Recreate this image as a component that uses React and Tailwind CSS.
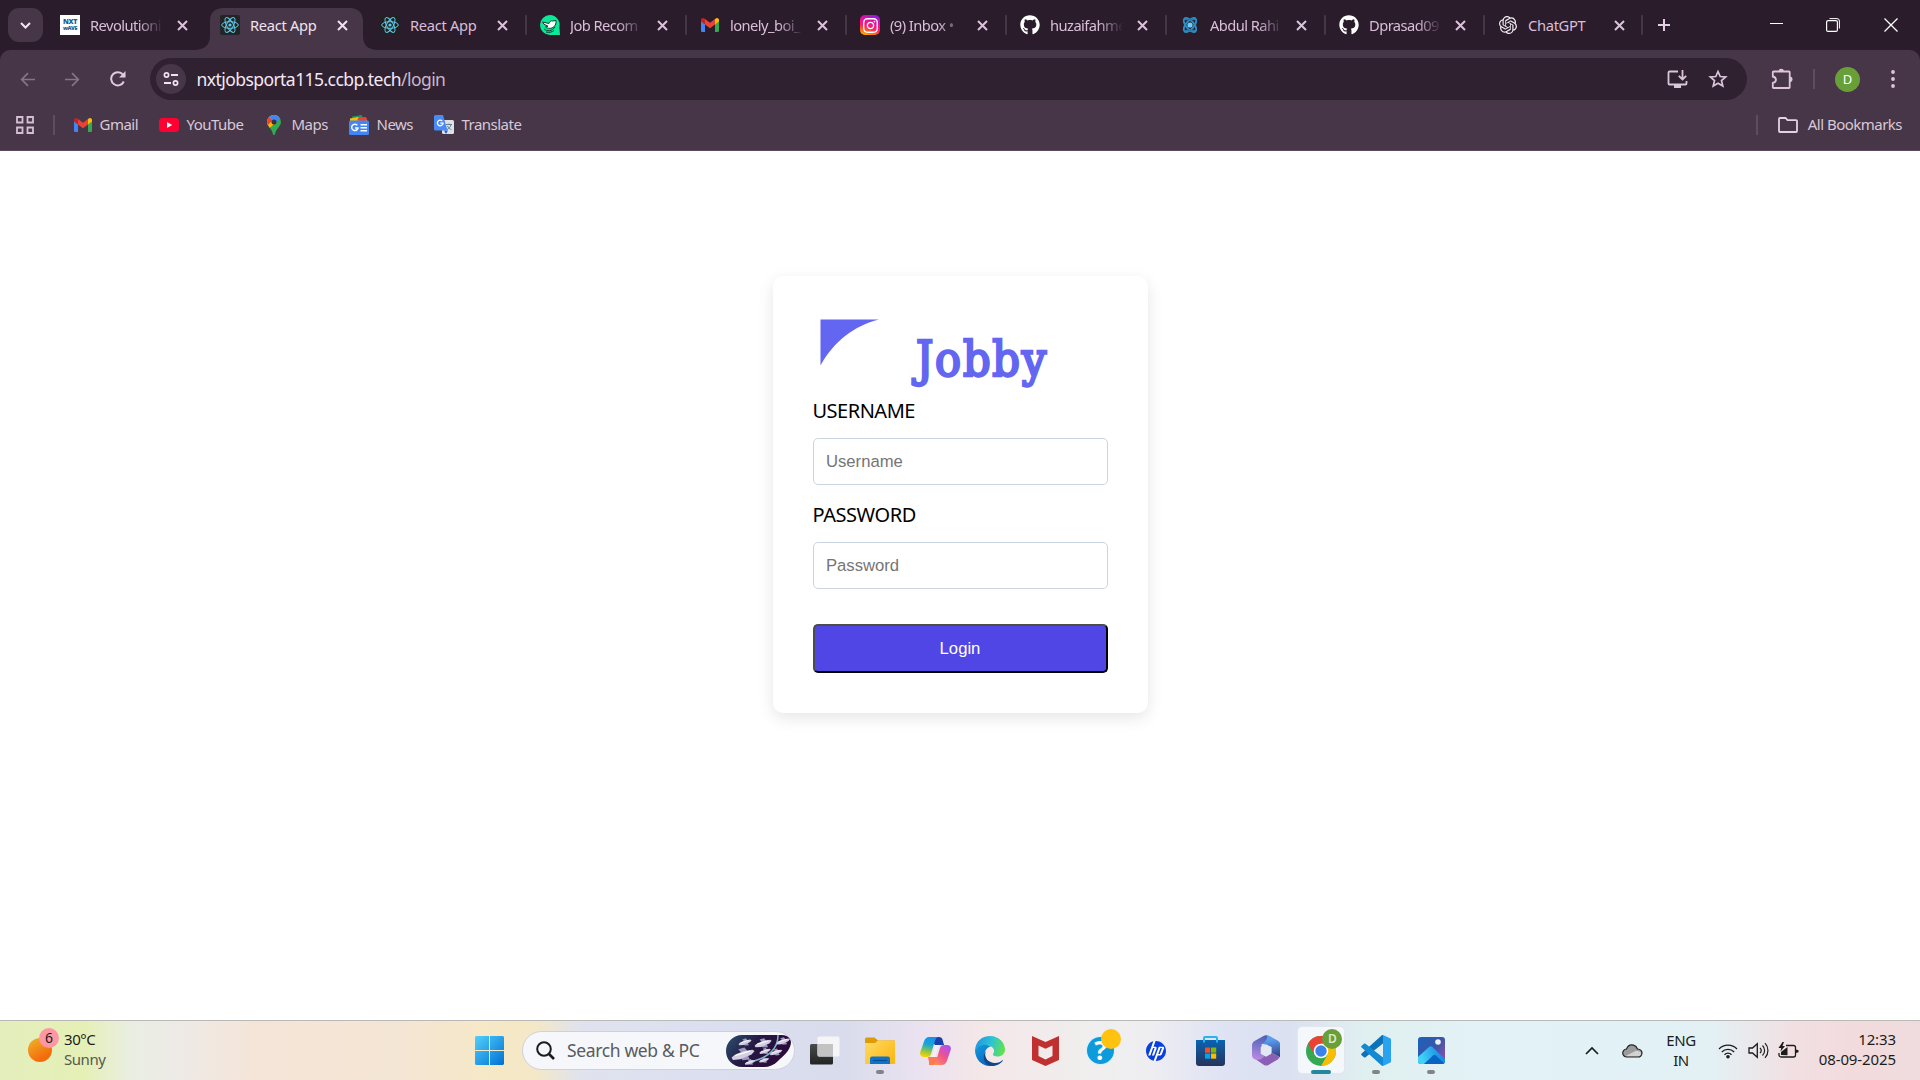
import React from "react";
import { FaGithub, FaInstagram } from "react-icons/fa";
import { SiOpenai, SiHp } from "react-icons/si";

const S = ({ w = 20, h, vb, children, className = "" }) => (
  <svg width={w} height={h || w} viewBox={vb || `0 0 ${w} ${h || w}`} fill="none" className={`block shrink-0 ${className}`}>
    {children}
  </svg>
);

/* ---------- favicons ---------- */
const NxtWave = () => (
  <div className="flex h-5 w-5 flex-col items-center justify-center bg-white text-[7px] leading-[6px] font-black tracking-[-0.4px] text-[#1d5c92]">
    <span>NXT</span>
    <span className="text-[5.5px] leading-[6px] text-[#2d5f86]">wAVE</span>
  </div>
);
const ReactIcon = ({ bg = "#222426", c = "#5fc9e6" }) => (
  <S>
    <rect width="20" height="20" rx="2" fill={bg} />
    <g stroke={c} strokeWidth="1">
      <ellipse cx="10" cy="10" rx="8.3" ry="3.3" />
      <ellipse cx="10" cy="10" rx="8.3" ry="3.3" transform="rotate(60 10 10)" />
      <ellipse cx="10" cy="10" rx="8.3" ry="3.3" transform="rotate(120 10 10)" />
    </g>
    <circle cx="10" cy="10" r="1.6" fill={c} />
  </S>
);
const BirdIcon = () => (
  <S>
    <path d="M10 0a10 10 0 0 1 9.4 12.2L20 20H10A10 10 0 0 1 10 0z" fill="#0be897" />
    <path d="M2.5 7 9 8.500c.5-2 2-3 3.500-2.500l3.500-.5c.5 3-1 6.500-4 7.500-2.500.8-5 .3-6.500-1l2.500-.8-4-2z" fill="#fff" stroke="#153c33" strokeWidth="1" />
    <path d="M4 14c3 2.400 8 2.600 11-2M6 17c3 .8 6 .2 8-1.500" stroke="#153c33" strokeWidth="1" />
  </S>
);
const GmailIcon = () => (
  <S w={18} h={14}>
    <path d="M0 2.400V12.800A1.200 1.200 0 0 0 1.200 14H4V6z" fill="#4285f4" />
    <path d="M18 2.400V12.800A1.200 1.200 0 0 1 16.800 14H14V6z" fill="#34a853" />
    <path d="M14 1.200V6.500l4-3V2C18 .2 15.900-.6 14.600.600z" fill="#fbbc04" />
    <path d="M4 6.500V1l5 3.800L14 1v5.500l-5 3.800z" fill="#ea4335" />
    <path d="M0 2v1.500l4 3V1l-.6-.4C2.100-.6 0 .2 0 2z" fill="#c5221f" />
  </S>
);
const InstaIcon = () => (
  <div className="flex h-5 w-5 items-center justify-center rounded-[5px] bg-[linear-gradient(200deg,#7a1cf0_0%,#f0109a_38%,#ff1f6a_60%,#ff8a00_85%,#ffc800_100%)]">
    <FaInstagram size={17} color="#fff" />
  </div>
);
const GitIcon = () => <FaGithub size={20} color="#fff" />;
const AtomIcon = () => (
  <S>
    <g stroke="#2f8fc4" strokeWidth="1.900">
      <ellipse cx="10" cy="10" rx="8.500" ry="4" transform="rotate(50 10 10)" />
      <ellipse cx="10" cy="10" rx="8.500" ry="4" transform="rotate(130 10 10)" />
    </g>
    <path d="M5 4.500h10M5 15.500h10" stroke="#2878ae" strokeWidth="1.300" />
    <circle cx="10" cy="10" r="2.600" fill="#6ecdf2" />
  </S>
);
const GptIcon = () => <SiOpenai size={18} color="#f2ecf2" />;

const tabs = [
  { t: "Revolutioni", i: <NxtWave />, fade: true, w: "w-[160px]" },
  { t: "React App", i: <ReactIcon />, active: true, w: "w-[160px]" },
  { t: "React App", i: <ReactIcon bg="#232023" />, w: "w-[160px]", sep: true },
  { t: "Job Recom", i: <BirdIcon />, fade: true, w: "w-[160px]", sep: true },
  { t: "lonely_boi_", i: <GmailIcon />, fade: true, w: "w-[160px]", sep: true },
  { t: "(9) Inbox •", i: <InstaIcon />, fade: true, w: "w-[160px]", sep: true },
  { t: "huzaifahme", i: <GitIcon />, fade: true, w: "w-[160px]", sep: true },
  { t: "Abdul Rahi", i: <AtomIcon />, fade: true, w: "w-[159px]", sep: true, narrow: true },
  { t: "Dprasad09", i: <GitIcon />, fade: true, w: "w-[159px]", sep: true, narrow: true },
  { t: "ChatGPT", i: <GptIcon />, w: "w-[158px]", sep: true, narrow: true },
];

const Tab = ({ t, i, active, fade, w, sep, narrow }) => (
  <div className={`relative flex h-[42px] shrink-0 items-center pb-2 pl-[13px] ${w}`}>
    {active && (
      <S w={184} h={42} className="absolute top-0 left-[-13px]">
        <path d="M0 42C10 42 16 37 16 28V13C16 5 21 0 29 0H156C164 0 169 5 169 13V28C169 37 174 42 184 42z" fill="#473647" />
      </S>
    )}
    <div className="relative flex w-5 shrink-0 justify-center">{i}</div>
    <div
      className={`relative ml-[10px] w-[73px] shrink-0 overflow-hidden text-[14.7px] leading-5 whitespace-nowrap ${
        active ? "text-[#f0e2f0]" : "text-[#d9bdd9]"
      } ${fade ? "tracking-[-0.56px] [mask-image:linear-gradient(to_right,black_66%,transparent_100%)]" : "tracking-[-0.32px]"}`}
    >
      {t}
    </div>
    <S w={11} className={`relative ${narrow ? "ml-[13px]" : "ml-[14px]"}`}>
      <path d="M1 1l9 9M10 1l-9 9" stroke={active ? "#f0e2f0" : "#dcc3dc"} strokeWidth="2" />
    </S>
    {sep && <div className="ml-auto h-5 w-[2px] rounded-full bg-[#473647]" />}
  </div>
);

/* ---------- bookmarks ---------- */
const YouTubeIcon = () => (
  <S w={20} h={14}>
    <rect width="20" height="14" rx="3.500" fill="#ff0033" />
    <path d="M8 4l5.200 3L8 10z" fill="#fff" />
  </S>
);
const MapsIcon = () => (
  <S w={14} h={20}>
    <clipPath id="pin"><path d="M7 0a7 7 0 0 1 7 7c0 4.500-5.200 6.500-5.900 12.200-.2 1-2 1-2.200 0C5.200 13.500 0 11.500 0 7a7 7 0 0 1 7-7z" /></clipPath>
    <g clipPath="url(#pin)">
      <rect width="14" height="20" fill="#34a853" />
      <path d="M0 0h14L5 11 0 15z" fill="#fbbc04" />
      <path d="M3 0h11v3L8 8 3 2z" fill="#4285f4" />
      <path d="M0 3 4 0h10L9 4 5 8 1.500 4z" fill="#4285f4" opacity=".6" />
      <path d="M0 3.500 1.800 2 5.500 5.200 1 10 0 8z" fill="#ea4335" />
    </g>
    <circle cx="7" cy="7" r="2.500" fill="#3b3040" />
  </S>
);
const NewsIcon = () => (
  <S>
    <path d="M3 1.500 13 0l1 5H3z" fill="#0f9d58" />
    <path d="M6 3l11-1 1 4H6z" fill="#ea4335" />
    <path d="M1 3.500 9 2l9 3v3H1z" fill="#fbbc04" />
    <path d="M10 1.500l8 2-1 3-9-1z" fill="#ea4335" />
    <rect y="5.500" width="20" height="14.500" rx="1.500" fill="#4285f4" />
    <path d="M11.500 9.700H18M11.500 12.700H18M11.500 15.700H18" stroke="#fff" strokeWidth="1.500" />
    <path d="M8.300 10.300A3.200 3.200 0 1 0 9 13H6" stroke="#fff" strokeWidth="1.500" />
  </S>
);
const TranslateIcon = () => (
  <S>
    <rect x="8" y="5" width="12" height="14" rx="1.500" fill="#dfe1e5" />
    <path d="M12 9.500h6M15 8.500v1M17 9.500c-.5 2.500-2 4-4 5M13.500 11c1 2 2.500 3 4 3.800" stroke="#5f7f95" strokeWidth="1" />
    <path d="M10 15.500h4L12 19z" fill="#2a56c6" />
    <path d="M1.500 0H9l4.500 15.500h-12A1.500 1.500 0 0 1 0 14V1.500A1.500 1.500 0 0 1 1.500 0z" fill="#4a8af4" />
    <path d="M8.200 6A2.800 2.800 0 1 0 9 8.200H6.300" stroke="#fff" strokeWidth="1.300" />
  </S>
);

const Bookmark = ({ icon, label, className = "" }) => (
  <div className={`flex items-center whitespace-nowrap ${className}`}>
    {icon}
    <span className="mb-[2px] ml-2">{label}</span>
  </div>
);

/* ---------- taskbar icons ---------- */
const WindowsIcon = () => (
  <S w={29}>
    <defs><linearGradient id="win" x1="0" y1="0" x2="29" y2="29" gradientUnits="userSpaceOnUse"><stop stopColor="#52d0fb" /><stop offset="1" stopColor="#0070d4" /></linearGradient></defs>
    <path d="M1 0h13v14H0V1zM15 0h13l1 1v13H15zM0 15h14v14H1l-1-1zM15 15h14v13l-1 1H15z" fill="url(#win)" />
  </S>
);
const TaskView = () => (
  <S w={30} h={30}>
    <defs><linearGradient id="tv" x1="0" y1="8" x2="0" y2="28" gradientUnits="userSpaceOnUse"><stop stopColor="#4a4b4b" /><stop offset="1" stopColor="#232424" /></linearGradient></defs>
    <rect x="0" y="8" width="23" height="20.500" rx="1.500" fill="url(#tv)" />
    <rect x="7.500" y="0.500" width="22" height="20" rx="1.500" fill="#f5f5f7" />
    <path d="M7.500 8h15.500v12.500H9L7.500 19z" fill="#c3c3c4" />
  </S>
);
const Explorer = () => (
  <S w={30} h={27}>
    <defs><linearGradient id="ex" x1="0" y1="3" x2="24" y2="27" gradientUnits="userSpaceOnUse"><stop stopColor="#ffdb66" /><stop offset="1" stopColor="#fcb917" /></linearGradient></defs>
    <path d="M0 2a1.500 1.500 0 0 1 1.500-1.500H9.500L13 3.500H29a1 1 0 0 1 1 1V10H0z" fill="#dd9b05" />
    <path d="M0 6h10l3-2.500h16.500l.5.500v22.500l-.5.500H.5L0 26.500z" fill="url(#ex)" />
    <path d="M5 27v-5.500A2 2 0 0 1 7 19.500H23a2 2 0 0 1 2 2V27z" fill="#0f74c9" />
    <path d="M8 23.500H22" stroke="#074f93" strokeWidth="1.200" />
  </S>
);
const Copilot = () => (
  <S w={31} h={28}>
    <defs>
      <linearGradient id="cp1" x1="12" y1="0" x2="8" y2="20" gradientUnits="userSpaceOnUse"><stop stopColor="#1690e8" /><stop offset=".4" stopColor="#1aa6d8" /><stop offset=".7" stopColor="#7cc553" /><stop offset="1" stopColor="#ffd000" /></linearGradient>
      <linearGradient id="cp2" x1="27" y1="8" x2="12" y2="28" gradientUnits="userSpaceOnUse"><stop stopColor="#ae52f0" /><stop offset=".45" stopColor="#f0528e" /><stop offset="1" stopColor="#ff9a50" /></linearGradient>
    </defs>
    <path d="M9 0h10c2 0 3 1 3.500 2.500L24 8H15z" fill="#1b3fae" />
    <path d="M9 28h10c2 0 3-1 4-4l1-4H8l1 5z" fill="#ff7a53" />
    <path d="M9.500 0H18c-2.500 1-3 3.500-3.700 6L11 17c-.6 2-1.800 3-4 3H4c-3 0-4.500-2-3.700-5L4 4.500C5 1.500 6.500 0 9.500 0z" fill="url(#cp1)" />
    <path d="M21.500 28H13c2.500-1 3-3.500 3.700-6L20 11c.6-2 1.800-3 4-3h3c3 0 4.500 2 3.700 5L27 23.500c-1 3-2.500 4.500-5.500 4.500z" fill="url(#cp2)" />
    <path d="M15 8h4.500c-1 .8-1.500 1.800-1.800 3L15.200 20H11c.8-.8 1-1.500 1.300-2.500z" fill="#f6ecf4" />
  </S>
);
const Edge = () => (
  <S w={30} h={30} vb="0 0 30 30">
    <defs>
      <linearGradient id="ed1" x1="2" y1="6" x2="29" y2="14" gradientUnits="userSpaceOnUse"><stop stopColor="#1f9be2" /><stop offset=".5" stopColor="#2fc3d2" /><stop offset="1" stopColor="#62e34c" /></linearGradient>
      <linearGradient id="ed2" x1="3" y1="10" x2="16" y2="29" gradientUnits="userSpaceOnUse"><stop stopColor="#1296dc" /><stop offset="1" stopColor="#0a5fb8" /></linearGradient>
    </defs>
    <path d="M0 14C1 5 7 0 15 0c9 0 15 6.500 15 13.500 0 4.500-3.500 7-7.500 7-3 0-5-1-4.500-2.500 1.800-2 1.500-4.500-.5-6.500C13 7.500 4 8 0 14z" fill="url(#ed1)" />
    <path d="M0 14C3 8.500 11 7.500 15.500 10.500 11.500 11.500 9 15.500 10 20c1 5 5 8.500 9.500 9.200C18 29.800 16.500 30 15 30 6.500 30 0 23 0 14z" fill="url(#ed2)" />
    <path d="M11 15c-3 7 3 12 9 12 3.500 0 6-1.500 7.300-2.800.4-.4.700.1.500.5C25.500 28 20.500 30 17 30 9 29.500 6.500 20.500 11 15z" fill="#12468a" />
  </S>
);
const McAfee = () => (
  <S w={27} h={30}>
    <path d="M0 0l13.500 6L27 0v24l-13.500 6L0 24zM6.500 9.500v10.500L13.500 23.500l7-3.500V9.500L13.500 12.800z" fill="#c0302f" fillRule="evenodd" />
  </S>
);
const Help = () => (
  <div className="relative flex h-[27px] w-[27px] items-center justify-center rounded-full bg-[#0d9bdc] shadow-[0_0_0_1px_#d7eef8]">
    <span className="text-[26px] leading-[27px] font-bold text-white">?</span>
    <div className="absolute -top-2 left-[14px] h-5 w-5 rounded-full bg-[#ffc20e]" />
  </div>
);
const Hp = () => (
  <div className="rounded-full bg-white"><SiHp size={20} color="#0a41dc" /></div>
);
const Store = () => (
  <S w={29} h={30}>
    <defs><linearGradient id="st" x1="0" y1="4" x2="0" y2="30" gradientUnits="userSpaceOnUse"><stop stopColor="#0b63b2" /><stop offset="1" stopColor="#25335a" /></linearGradient></defs>
    <path d="M0 4h29v23a3 3 0 0 1-3 3H3a3 3 0 0 1-3-3z" fill="url(#st)" />
    <path d="M8 6.500V2A1 1 0 0 1 9 1H20a1 1 0 0 1 1 1V6.500" stroke="#27b5f1" strokeWidth="2" />
    <path d="M9 11.500h5.200v5.200H9z" fill="#f25022" /><path d="M15 11.500h5.200v5.200H15z" fill="#7fba00" />
    <path d="M9 17.500h5.200v5.200H9z" fill="#00a4ef" /><path d="M15 17.500h5.200v5.200H15z" fill="#ffb900" />
  </S>
);
const M365 = () => (
  <S w={28} h={31}>
    <defs>
      <linearGradient id="m1" x1="12" y1="0" x2="4" y2="26" gradientUnits="userSpaceOnUse"><stop stopColor="#4c5fb0" /><stop offset=".5" stopColor="#7f78cf" /><stop offset="1" stopColor="#c48be6" /></linearGradient>
      <linearGradient id="m2" x1="22" y1="4" x2="26" y2="24" gradientUnits="userSpaceOnUse"><stop stopColor="#5a9df0" /><stop offset="1" stopColor="#2f3474" /></linearGradient>
    </defs>
    <path d="M13 .5c2-.8 3.500 0 5 .8l8 4.500c1.500.8 2 2 2 3.500v13l-8.500-4.500V12L9 8z" fill="url(#m2)" />
    <path d="M4 24.500 13 19.500l6.500-2 8 4.500c-.3 1-.8 1.800-1.800 2.400L16.500 30c-1.500.8-3 .8-4.500 0z" fill="#8a5fb5" />
    <path d="M14.500.2C16 3 14 6.500 9.500 9.500v9l3.500 2c-2 2.500-5 5.500-10.500 3.800C.8 23.400 0 22 0 20.500v-10C0 8.500.8 7 2.500 6L12 .8z" fill="url(#m1)" />
    <path d="M14 9.200l5.300 3.100v6.400L14 21.800l-5.300-3.100v-6.400z" fill="#e3e7f4" />
  </S>
);
const Chrome = () => (
  <S w={30}>
    <circle cx="15" cy="15" r="15" fill="#34a853" />
    <path d="M2 7.500A15 15 0 0 1 28 7.500H15L8.500 18.700z" fill="#ea4335" />
    <path d="M28 7.500A15 15 0 0 1 15 30L21.500 18.700 15 7.500z" fill="#fbbc04" />
    <circle cx="15" cy="15" r="7.300" fill="#fff" />
    <circle cx="15" cy="15" r="5.700" fill="#3b82ea" />
  </S>
);
const VSCode = () => (
  <S w={30} h={31}>
    <path d="M22 0l7 3.200c.7.300 1 .8 1 1.500v21.600c0 .7-.3 1.200-1 1.500L22 31z" fill="#2aa2f2" />
    <path d="M22 0v8.500L4.500 22.300c-.6.400-1 .4-1.500 0L.6 20.200c-.6-.6-.6-1.200 0-1.800L20 1C20.500.3 21.200 0 22 0z" fill="#0e72b9" />
    <path d="M22 31v-8.500L4.500 8.700c-.6-.4-1-.4-1.500 0L.6 10.800c-.6.6-.6 1.200 0 1.800L20 30c.5.700 1.200 1 2 1z" fill="#1489d3" />
  </S>
);
const Photos = () => (
  <S w={27}>
    <defs>
      <linearGradient id="ph1" x1="0" y1="0" x2="27" y2="20" gradientUnits="userSpaceOnUse"><stop stopColor="#1a62bb" /><stop offset=".6" stopColor="#3b55a8" /><stop offset="1" stopColor="#8a4fa8" /></linearGradient>
      <linearGradient id="ph2" x1="4" y1="22" x2="22" y2="16" gradientUnits="userSpaceOnUse"><stop stopColor="#3fd3f7" /><stop offset="1" stopColor="#168fe6" /></linearGradient>
      <clipPath id="phc"><rect width="27" height="27" rx="3" /></clipPath>
    </defs>
    <g clipPath="url(#phc)">
      <rect width="27" height="27" fill="url(#ph1)" />
      <path d="M0 20 11 10c1.200-1 2.400-1 3.500 0L27 22v5H0z" fill="url(#ph2)" />
      <path d="M6 27l9-8.500c1-.9 2-.9 3 0L27 27z" fill="#0a64c4" />
      <circle cx="20" cy="5" r="2.800" fill="#eaf2fb" />
    </g>
  </S>
);

const apps = [
  { i: <TaskView /> },
  { i: <Explorer />, dot: true },
  { i: <Copilot /> },
  { i: <Edge /> },
  { i: <McAfee /> },
  { i: <Help /> },
  { i: <Hp /> },
  { i: <Store /> },
  { i: <M365 /> },
  { i: <Chrome />, on: true },
  { i: <VSCode />, dot: true },
  { i: <Photos />, dot: true },
];

const Fighter = ({ x, y, s = 1 }) => (
  <g transform={`translate(${x} ${y}) scale(${s}) rotate(-12)`}>
    <path d="M-4-6 3-6.500 6-1H-1zM-3 3h8l1 4.500-8-1z" fill="#9d97bb" />
    <path d="M-13 1.500C-11-1-4-2.500 2-3l9 .5 2 2L9 2.500-4 5-12 4z" fill="#d3cee2" />
    <path d="M-9 0 8-1.500" stroke="#fff" strokeWidth="1.300" />
  </g>
);

const SearchArt = () => (
  <S w={66} h={32}>
    <defs>
      <linearGradient id="sa" x1="0" y1="0" x2="40" y2="32" gradientUnits="userSpaceOnUse"><stop stopColor="#2a5270" /><stop offset=".55" stopColor="#241943" /><stop offset="1" stopColor="#2b0d3c" /></linearGradient>
      <clipPath id="sac"><path d="M16 0H56c6 0 9 4 9 8-1 8-8 13-13 18-4 4-9 6-14 6H16A16 16 0 0 1 16 0z" /></clipPath>
    </defs>
    <g clipPath="url(#sac)">
      <rect width="66" height="32" fill="url(#sa)" />
      <path d="M28 26C42 22 52 14 52 0" stroke="#7fb6c6" strokeWidth="1.500" />
      <Fighter x={19} y={7} s={0.52} />
      <Fighter x={37} y={8} s={0.68} />
      <Fighter x={17} y={19} s={0.92} />
      <Fighter x={57} y={6} s={0.55} />
      <Fighter x={39} y={16} s={0.45} />
      <Fighter x={50} y={17} s={0.5} />
      <Fighter x={24} y={27} s={0.42} />
      <Fighter x={38} y={25} s={0.4} />
    </g>
  </S>
);

export default function App() {
  return (
    <div className="flex h-[1080px] w-[1920px] flex-col overflow-hidden bg-white font-['Noto_Sans','Open_Sans',sans-serif]">
      {/* tab strip */}
      <header className="flex h-[50px] items-start bg-[#2a1c2b] pt-2">
        <div className="ml-2 flex h-[34px] w-[35px] items-center justify-center rounded-[11px] bg-[#473647]">
          <S w={11} h={7}><path d="M1 1l4.500 4.500L10 1" stroke="#f3e4f3" strokeWidth="2" /></S>
        </div>
        <div className="ml-1 flex">
          {tabs.map((t, k) => <Tab key={k} {...t} />)}
        </div>
        <S w={14} className="mt-[10px] ml-[14px]"><path d="M7 1v12M1 7h12" stroke="#e6cde6" strokeWidth="2" /></S>
        <div className="mt-[10px] mr-[22px] ml-auto flex items-center">
          <S w={13} h={14}><path d="M0 5.500h13" stroke="#fff" strokeWidth="1" /></S>
          <S w={14} className="ml-[43px]">
            <path d="M3.500.6H11A2.400 2.400 0 0 1 13.400 3V10.500" stroke="#fff" />
            <rect x=".6" y="2.600" width="10.800" height="10.800" rx="1.500" stroke="#fff" strokeWidth="1.200" />
          </S>
          <S w={14} className="ml-[44px]"><path d="M.5.500l13 13M13.500.500l-13 13" stroke="#fff" strokeWidth="1.300" /></S>
        </div>
      </header>

      <div className="h-[101px] bg-[#2a1c2b]">
        <div className="h-[101px] rounded-t-[10px] border-b border-[#5b4a5b] bg-[#473647]">
          {/* toolbar */}
          <div className="flex h-[58px] items-center">
            <S w={15} className="ml-5"><path d="M15 7.500H2M8 1.200 1.700 7.500 8 13.800" stroke="#86728a" strokeWidth="1.700" /></S>
            <S w={15} className="ml-[30px]"><path d="M0 7.500h13M7 1.200l6.300 6.300L7 13.800" stroke="#86728a" strokeWidth="1.700" /></S>
            <S w={16} className="ml-[30px]">
              <path d="M13.800 10.500A6.600 6.600 0 1 1 13 3.700L14.800 5.500" stroke="#e2c8e2" strokeWidth="2" />
              <path d="M15.500 0v6.500H9z" fill="#e2c8e2" />
            </S>
            <div className="ml-[24px] flex h-[42px] w-[1597px] items-center rounded-full bg-[#302130]">
              <div className="ml-[6px] flex h-[30px] w-[30px] items-center justify-center rounded-full bg-[#473647]">
                <S w={16} h={14} className="text-[#f0e2f0]">
                  <circle cx="3.500" cy="3" r="2.100" stroke="currentColor" strokeWidth="1.700" />
                  <circle cx="12.500" cy="11" r="2.100" stroke="currentColor" strokeWidth="1.700" />
                  <path d="M8 3h7M1 11h7" stroke="currentColor" strokeWidth="1.800" />
                </S>
              </div>
              <div className="ml-[10.5px] text-[17.5px] leading-6 tracking-[-0.56px] whitespace-nowrap text-[#f4e8f4]">
                nxtjobsporta115.ccbp.tech<span className="text-[#c9b7c9]">/login</span>
              </div>
              <S w={21} h={19} className="mr-[20px] ml-auto">
                <path d="M11 1.500H2.500a1 1 0 0 0-1 1v11a1 1 0 0 0 1 1h16a1 1 0 0 0 1-1V11" stroke="#dac6da" strokeWidth="1.800" />
                <path d="M7 15h7v3H7z" fill="#dac6da" />
                <path d="M15.500 0v9M11.800 5.800l3.700 3.700 3.700-3.700" stroke="#dac6da" strokeWidth="1.800" />
              </S>
              <S w={20} className="mr-[19px]">
                <path d="M10 2.500l2.200 5 5.500.5-4.200 3.600 1.300 5.400L10 14.200 5.200 17l1.300-5.400L2.300 8l5.500-.5z" stroke="#dac6da" strokeWidth="1.700" />
              </S>
            </div>
            <S w={22} className="ml-[24px]">
              <path d="M2.500 3.500H18a.7.700 0 0 1 .7.700V19.300a.7.700 0 0 1-.7.700H2.500a.7.700 0 0 1-.7-.7V15C6 14 6 9.500 1.800 8.500V4.200a.7.700 0 0 1 .7-.7z" stroke="#dfc4df" strokeWidth="1.800" />
              <path d="M7.500 3.500a2.700 2.700 0 0 1 5.400 0zM18.700 8.500a2.800 2.800 0 0 1 0 5.600z" fill="#dfc4df" />
            </S>
            <div className="ml-[20px] h-5 w-[2px] bg-[#5f4d5f]" />
            <div className="ml-[20px] flex h-[25px] w-[25px] items-center justify-center rounded-full bg-[#689f38] text-[13px] leading-none text-white">D</div>
            <S w={4} h={18} className="ml-[31px]">
              <circle cx="2" cy="2" r="1.900" fill="#dfc4df" /><circle cx="2" cy="9" r="1.900" fill="#dfc4df" /><circle cx="2" cy="16" r="1.900" fill="#dfc4df" />
            </S>
          </div>
          {/* bookmarks bar */}
          <div className="mt-[2px] flex h-[30px] items-center text-[15px] leading-5 tracking-[-0.52px] text-[#d8c9d8]">
            <S w={18} className="ml-[15.5px]">
              <path d="M1 1h5.500v5.500H1zM11.500 1H17v5.500h-5.500zM1 11.500h5.500V17H1zM11.500 11.500H17V17h-5.500z" stroke="#d3c0d3" strokeWidth="1.800" />
            </S>
            <div className="ml-[19px] h-5 w-[2px] bg-[#5f4d5f]" />
            <div className="ml-[19px] w-[85px]"><Bookmark icon={<GmailIcon />} label="Gmail" /></div>
            <div className="w-[108px]"><Bookmark icon={<YouTubeIcon />} label="YouTube" /></div>
            <div className="w-[82px]"><Bookmark icon={<div className="pr-[3px]"><MapsIcon /></div>} label="Maps" /></div>
            <div className="w-[85px]"><Bookmark icon={<NewsIcon />} label="News" /></div>
            <Bookmark icon={<TranslateIcon />} label="Translate" />
            <div className="ml-auto h-5 w-[2px] bg-[#5f4d5f]" />
            <S w={20} h={16} className="ml-[20px]">
              <path d="M1 14V2a1 1 0 0 1 1-1H7.500L9.500 3.200H18a1 1 0 0 1 1 1V14a1 1 0 0 1-1 1H2a1 1 0 0 1-1-1z" stroke="#e2d3e2" strokeWidth="1.800" />
            </S>
            <span className="mr-[18px] mb-[2px] ml-[10px] whitespace-nowrap">All Bookmarks</span>
          </div>
        </div>
      </div>

      {/* login page */}
      <main className="flex flex-1 justify-center bg-white">
        <form className="mt-[125px] flex h-[437px] w-[375px] flex-col rounded-[10px] bg-white px-10 shadow-[0_5px_16px_rgba(0,0,0,0.10)]">
          <div className="mt-[43px] flex h-[75px] items-start">
            <S w={60} h={47} className="ml-[7.5px]"><path d="M.5.500H59C34 7 14 22 .5 46.500z" fill="#6366f1" /></S>
            <span className="mt-[10px] ml-[36px] font-['DejaVu_Serif_Condensed','DejaVu_Serif',serif] text-[48px] leading-[60px] font-normal tracking-[1.8px] text-[#6366f1] [-webkit-text-stroke:2.4px_#6366f1]">Jobby</span>
          </div>
          <label className="mt-[4px] h-[40px] text-[20px] leading-[25px] tracking-[-0.5px] text-black">USERNAME</label>
          <input placeholder="Username" className="h-[47px] w-[295px] shrink-0 rounded-[5px] border border-[#cbd5e1] bg-white px-[12.5px] font-['Liberation_Sans',Arial,sans-serif] text-[16.67px] placeholder:text-[#757575]" />
          <label className="mt-[17px] h-[40px] text-[20px] leading-[25px] tracking-[-0.45px] text-black">PASSWORD</label>
          <input placeholder="Password" className="h-[47px] w-[295px] shrink-0 rounded-[5px] border border-[#cbd5e1] bg-white px-[12.5px] font-['Liberation_Sans',Arial,sans-serif] text-[16.67px] placeholder:text-[#757575]" />
          <button type="button" className="mt-[35px] h-[49px] w-[295px] shrink-0 rounded-[5px] border-2 border-t-[#4c4c4c] border-r-black border-b-black border-l-[#4c4c4c] bg-[#4f46e5] font-['Liberation_Sans',Arial,sans-serif] text-[16.67px] text-white">Login</button>
        </form>
      </main>

      {/* taskbar */}
      <footer className="flex h-[60px] items-center border-t border-[#b9bab8] bg-[linear-gradient(90deg,#e3eebd_0px,#e5f0b6_85px,#e9eee2_130px,#eeeae6_180px,#f5e5d9_250px,#f4e6d4_400px,#f6e8c8_480px,#f4e8c6_535px,#e0e3ee_580px,#dcdff0_700px,#d8dcec_840px,#eae2f0_920px,#f4e7e8_980px,#f0eeee_1090px,#eeeef2_1150px,#dfe3f3_1220px,#dbe1f1_1290px,#e0f0f0_1370px,#e2f2f6_1480px,#e3f1f5_1710px,#f1e0e3_1790px,#f3dbdd_1850px,#efdbde_1920px)]">
        <div className="ml-[28px] flex w-[447px] items-center pb-[2px]">
          <div className="relative h-6 w-6 rounded-full bg-[linear-gradient(150deg,#efb62a,#f36c0c_75%)]">
            <div className="absolute top-[-10px] left-[11px] flex h-5 w-5 items-center justify-center rounded-full bg-[#ff97a3] text-[14px] leading-none text-[#1b1b1b]">6</div>
          </div>
          <div className="mb-[2px] ml-[12px] text-[15px] leading-5 tracking-[-0.45px] text-[#1c1c1c]">
            <div>30°C</div>
            <div className="text-[#555a50]">Sunny</div>
          </div>
        </div>
        <WindowsIcon />
        <div className="ml-[18px] flex h-[39px] w-[273px] items-center rounded-full border border-[#cfd0da] bg-[#f6f7fb]">
          <S w={19} className="ml-[13px]">
            <circle cx="8" cy="8" r="6.800" stroke="#1c1c1c" strokeWidth="2" />
            <path d="M13 13l5 5" stroke="#1c1c1c" strokeWidth="2.600" />
          </S>
          <span className="mb-[1px] ml-[12px] text-[17.5px] leading-6 tracking-[-0.36px] whitespace-nowrap text-[#595b60]">Search web &amp; PC</span>
          <div className="mr-[2px] ml-auto"><SearchArt /></div>
        </div>
        <div className="ml-[2.5px] flex">
          {apps.map(({ i, dot, on }, k) => (
            <div key={k} className="relative flex h-[59px] w-[55.1px] items-center justify-center">
              {on && <div className="absolute top-[5px] h-12 w-12 rounded-[5px] border border-[#e2e6ef] bg-[#f4f7fb]" />}
              <div className="relative">{i}</div>
              {on && <div className="absolute top-2 left-[29px] flex h-5 w-5 items-center justify-center rounded-full bg-[#689f38] text-[12px] leading-none font-semibold text-[#dbe8cf]">D</div>}
              {on && <div className="absolute top-[49px] h-1 w-5 rounded-full bg-[#22889b]" />}
              {dot && <div className="absolute top-[49px] h-1 w-2 rounded-full bg-[#828488]" />}
            </div>
          ))}
        </div>
        <S w={14} h={9} className="ml-auto"><path d="M1 8l6-6 6 6" stroke="#1c1c1c" strokeWidth="1.700" /></S>
        <S w={21} h={14} className="ml-[23px]">
          <path d="M5 13a4 4 0 0 1-.5-8C6 1.500 9 .5 11.500 1.200c2 .6 3.300 1.800 4 3.800C18.500 5.300 20 7 20 9c0 2.500-2 4-4 4z" fill="#9b9b9b" />
          <path d="M3 12.300l11-5.500c3 0 5 1 5 3 0 1.500-1.500 2.600-3 2.600H5z" fill="#d3d3d3" />
          <path d="M5 13a4 4 0 0 1-.5-8C6 1.500 9 .5 11.500 1.200c2 .6 3.300 1.800 4 3.800C18.500 5.300 20 7 20 9c0 2.500-2 4-4 4z" stroke="#222" strokeWidth="1.200" />
        </S>
        <div className="mb-[2px] ml-[22px] w-[32px] text-center text-[15px] leading-5 tracking-[-0.4px] text-[#1c1c1c]">
          <div>ENG</div>
          <div>IN</div>
        </div>
        <S w={20} h={16} className="ml-[21px]">
          <path d="M1 6a12.500 12.500 0 0 1 18 0M3.800 9a8.700 8.700 0 0 1 12.400 0M6.500 11.700a5 5 0 0 1 7 0" stroke="#1c1c1c" strokeWidth="1.300" />
          <circle cx="10" cy="13.700" r="1.800" fill="#1c1c1c" />
        </S>
        <S w={21} h={17} className="ml-[10px]">
          <path d="M1 6h3.500L9.300 1.800V15.200L4.500 11H1z" stroke="#1c1c1c" strokeWidth="1.300" />
          <path d="M12 5.800a4 4 0 0 1 0 5.400M14.500 3.500a7 7 0 0 1 0 10M17 1.200a10.500 10.500 0 0 1 0 14.600" stroke="#1c1c1c" strokeWidth="1.200" />
        </S>
        <S w={21} h={17} className="ml-[9px]">
          <path d="M8 3.500h7.500a2 2 0 0 1 2 2V13a2 2 0 0 1-2 2H3a2 2 0 0 1-2-2v-2" stroke="#1c1c1c" strokeWidth="1.300" />
          <path d="M18 7.500l2.500.7v2l-2.500.8zM3 13V10l6.500-5V13.200zM4.500 0 .5 6h2.700L2.500 9.500 7 4H4.500L6 0z" fill="#1c1c1c" />
        </S>
        <div className="mr-[24px] mb-[4px] ml-[19px] w-[78px] text-right text-[15px] leading-5 tracking-[-0.1px] whitespace-nowrap text-[#1c1c1c]">
          <div>12:33</div>
          <div>08-09-2025</div>
        </div>
      </footer>
    </div>
  );
}
